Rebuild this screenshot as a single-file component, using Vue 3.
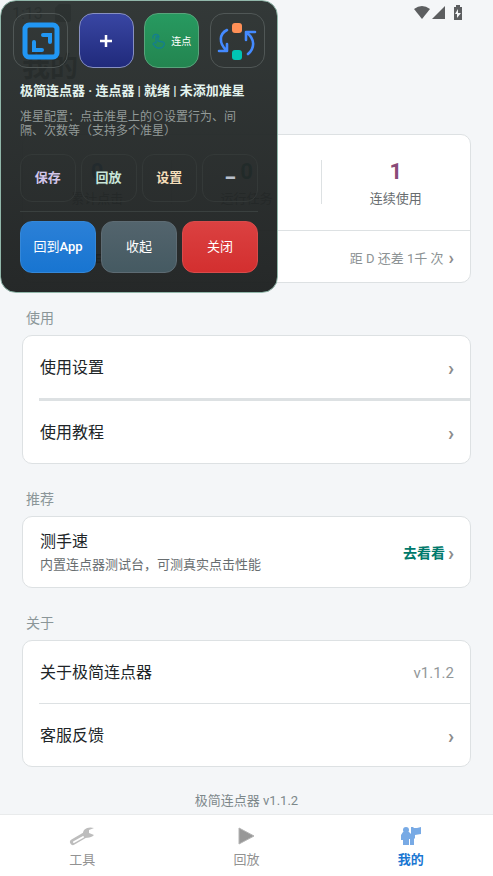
<script setup>
const stats = [
  { value: '0', label: '累计点击', tone: 'blue' },
  { value: '0', label: '运行任务', tone: 'teal' },
  { value: '1', label: '连续使用', tone: 'plum' },
]
const actions = [
  { text: '保存', tone: 'violet' },
  { text: '回放', tone: 'mint' },
  { text: '设置', tone: 'cream' },
  { text: '–', tone: 'mist' },
]
</script>

<template>
  <div class="screen">
    <header class="status">
      <span class="clock">1:13</span>
      <svg class="sim" width="16" height="18" viewBox="0 0 16 18"><path d="M4 0h10a2 2 0 0 1 2 2v14a2 2 0 0 1-2 2H2a2 2 0 0 1-2-2V4z" fill="#555" /></svg>
      <svg class="signals" width="50" height="16" viewBox="0 0 50 16" fill="#5c5e60">
        <path d="M0 4Q8-2 16 4L8 14z" />
        <path d="M31 1v13H18z" />
        <path d="M40 2h2V0h4v2h2v13h-8z" />
        <path d="M44 4l-3 5h2v4l4-5h-3z" fill="#f4f6f8" />
      </svg>
    </header>

    <main class="content">
      <h1>我的</h1>
      <section class="card summary">
        <div class="stats">
          <template v-for="(s, i) in stats" :key="s.label">
            <i v-if="i" class="divider"></i>
            <div class="stat">
              <strong :class="s.tone">{{ s.value }}</strong>
              <span>{{ s.label }}</span>
            </div>
          </template>
        </div>
        <a href="#level" class="level">
          <span class="rank">连点等级 E</span>
          <span>距 D 还差 1千 次</span>
          <b class="chev">›</b>
        </a>
      </section>

      <h2>使用</h2>
      <section class="card">
        <a href="#settings" class="row"><span>使用设置</span><b class="chev">›</b></a>
        <hr class="thick">
        <a href="#guide" class="row"><span>使用教程</span><b class="chev">›</b></a>
      </section>

      <h2>推荐</h2>
      <section class="card">
        <a href="#speed" class="row tall">
          <span class="copy">测手速<small>内置连点器测试台，可测真实点击性能</small></span>
          <span class="go">去看看</span><b class="chev">›</b>
        </a>
      </section>

      <h2>关于</h2>
      <section class="card">
        <a href="#about" class="row"><span>关于极简连点器</span><span class="version">v1.1.2</span></a>
        <hr>
        <a href="#support" class="row"><span>客服反馈</span><b class="chev">›</b></a>
      </section>
      <p class="foot">极简连点器 v1.1.2</p>
    </main>

    <nav class="tabs">
      <a href="#tools">
        <svg width="26" height="20" viewBox="0 0 26 20">
          <path d="M4 16L16 9" stroke="#bdbdbd" stroke-width="6" stroke-linecap="round" />
          <path d="M14 9C13 3 19 0 25 2L20 4V7L25 9C22 12 17 13 14 10z" fill="#bdbdbd" />
          <path d="M5 16L14 11" stroke="#fff" stroke-width="2" stroke-linecap="round" />
        </svg>
        <span>工具</span>
      </a>
      <a href="#replay">
        <svg width="26" height="20" viewBox="0 0 26 20"><path d="M6 2L21 10L6 18z" fill="#989898" stroke="#b4b4b4" /></svg>
        <span>回放</span>
      </a>
      <a href="#me" class="on">
        <svg width="26" height="20" viewBox="0 0 26 20" fill="#78aae5">
          <circle cx="8" cy="4" r="3" />
          <path d="M5 6h6l2 2V1h2l1 1h3l4-1v7l-6 1v3l-1 1v6h-4v-6h-1v6H5v-5H3V9z" />
        </svg>
        <span>我的</span>
      </a>
    </nav>

    <aside class="panel">
      <div class="tools">
        <button class="tool" aria-label="缩放">
          <svg width="38" height="38" viewBox="0 0 38 38" fill="none" stroke="#2196f3" stroke-linecap="round" stroke-linejoin="round">
            <rect x="3" y="3" width="32" height="32" rx="4" stroke-width="5" />
            <path d="M21 13h7v7M12 20v8h8" stroke-width="4" stroke-linejoin="miter" />
          </svg>
        </button>
        <button class="tool indigo" aria-label="添加">
          <svg width="12" height="12" viewBox="0 0 12 12"><path d="M6 0v12M0 6h12" stroke="#fff" stroke-width="2.5" /></svg>
        </button>
        <button class="tool green">
          <svg width="14" height="16" viewBox="0 0 14 16" fill="none" stroke="#157f8d" stroke-width="1.3" stroke-linecap="round" stroke-linejoin="round">
            <path d="M1 5C0 1 6 0 7 4" />
            <path d="M4 10V4q1-1 2 0v4l5 1q2 1 1 3-1 3-4 3H6q-2 0-5-4 1-2 3-1" />
          </svg>
          连点
        </button>
        <button class="tool" aria-label="切换">
          <svg width="40" height="40" viewBox="0 0 40 40" fill="none" stroke="#448aff" stroke-width="2.6" stroke-linecap="round" stroke-linejoin="round">
            <path d="M10 9C2 13 2 22 9 29M2 30h8v-7" />
            <path d="M31 33C38 27 38 18 30 12M29 19v-8h9" />
            <rect x="15" y="2" width="10" height="10" rx="3" fill="#ff9057" stroke="none" />
            <rect x="15" y="29" width="10" height="10" rx="3" fill="#00c4b4" stroke="none" />
          </svg>
        </button>
      </div>
      <strong class="state">极简连点器 · 连点器 | 就绪 | 未添加准星</strong>
      <p class="hint">准星配置：点击准星上的⊙设置行为、间隔、次数等（支持多个准星）</p>
      <div class="actions">
        <button v-for="a in actions" :key="a.text" :class="a.tone">{{ a.text }}</button>
      </div>
      <div class="exits">
        <button class="back">回到<b>App</b></button>
        <button class="fold">收起</button>
        <button class="close">关闭</button>
      </div>
    </aside>
  </div>
</template>

<style>
body { background: #f4f6f8; }
</style>

<style scoped>
* { box-sizing: border-box; }
.screen {
  position: relative;
  min-height: 100vh;
  display: flex;
  flex-direction: column;
  background: #f4f6f8;
  color: #202528;
  font-family: Roboto, "Noto Sans CJK SC", sans-serif;
}
a { color: inherit; text-decoration: none; }
button { font: inherit; padding: 0; cursor: pointer; }
.status { display: flex; align-items: center; gap: 12px; height: 26px; padding: 0 29px 0 12px; }
.clock { font-size: 16px; }
.signals { margin-left: auto; }
.content { flex: 1; padding: 20px 22px 0; }
h1 { margin: 0 0 44px; font-size: 28px; line-height: 44px; }
h2 { margin: 0; padding: 25px 4px 7px; font-size: 14px; line-height: 20px; font-weight: 400; color: #8b9699; }
.card { border: 1px solid #dde1e3; border-radius: 10px; background: #fff; overflow: hidden; }
.stats { display: flex; align-items: flex-start; padding: 25px 0 21px; border-bottom: 1px solid #dde1e3; }
.stat { flex: 1; display: flex; flex-direction: column; align-items: center; gap: 5px; font-size: 13px; line-height: 20px; color: #686d70; }
.divider { width: 1px; height: 44px; background: #dde1e3; }
.stat strong { font-size: 22px; line-height: 24px; }
.stat .blue { color: #1976d2; }
.stat .teal { color: #00796b; }
.stat .plum { color: #8a4b78; }
.level { display: flex; align-items: center; gap: 5px; height: 51px; padding: 2px 16px 0; font-size: 13px; color: #8c9294; }
.rank { margin-right: auto; color: #202528; font-weight: 700; }
.chev { font-size: 20px; line-height: 20px; font-weight: 700; color: #8c8c8c; }
.level .chev { font-size: 18px; }
.row { display: flex; align-items: center; gap: 3px; min-height: 62px; padding: 2px 16px 0 17px; font-size: 16px; line-height: 24px; }
.row > :first-child { margin-right: auto; }
.tall { min-height: 70px; }
.copy { display: flex; flex-direction: column; }
small { font-size: 13px; line-height: 22px; color: #686d70; }
.go { font-size: 14px; font-weight: 700; color: #00796b; }
.version { font-size: 15px; color: #929799; }
hr { height: 1px; margin: 0 0 0 16px; border: 0; background: #dde1e3; }
.thick { height: 3px; }
.foot { margin: 24px 0 0; font-size: 13px; line-height: 20px; text-align: center; color: #7d888b; }
.tabs { display: grid; grid-template-columns: repeat(3, 1fr); height: 62px; border-top: 1px solid #e9ebec; background: #fff; }
.tabs a { display: flex; flex-direction: column; align-items: center; gap: 5px; padding-top: 11px; font-size: 13px; line-height: 18px; color: #929292; }
.tabs .on { color: #1976d2; font-weight: 700; }
.panel {
  position: absolute;
  left: 0;
  top: 0;
  width: 278px;
  padding: 12px 12px 19px;
  border: 1px solid #91b7aa;
  border-radius: 16px;
  background: linear-gradient(rgba(43, 49, 48, .96), rgba(29, 32, 32, .96));
  color: #fff;
}
.tools { display: flex; justify-content: space-between; }
.tool { display: flex; align-items: center; justify-content: center; gap: 5px; width: 55px; height: 55px; border: 1px solid #505756; border-radius: 14px; background: transparent; color: #fff; font-size: 10px; }
.indigo { border-color: #8790c2; background: linear-gradient(#3946a3, #202a7b); }
.green { border-color: #58a47b; background: linear-gradient(#279a60, #238550); }
.state { display: block; margin: 13px 7px 9px; font-size: 13px; line-height: 20px; color: #e3f3ee; white-space: nowrap; }
.hint { margin: 0 7px; width: 228px; font-size: 12px; line-height: 14px; color: #929a98; }
.actions { display: grid; grid-template-columns: repeat(4, 1fr); gap: 5px; margin: 16px 7px 0; padding-bottom: 9px; border-bottom: 1px solid #3a403f; }
.actions button { height: 48px; border: 1px solid #343938; border-radius: 12px; background: transparent; font-size: 13px; line-height: 18px; font-weight: 700; }
.actions .violet { color: #d1c4e9; }
.actions .mint { color: #c8e6d9; }
.actions .cream { color: #f5deba; }
.actions .mist { color: #b8bfcb; font-size: 18px; font-weight: 900; }
.exits { display: grid; grid-template-columns: repeat(3, 1fr); gap: 5px; margin: 9px 7px 0; }
.exits button { height: 52px; border: 1px solid #5d6b73; border-radius: 12px; color: #fff; font-size: 13px; line-height: 18px; }
.exits b { font-weight: 500; }
.exits .back { border-color: #3487d8; background: linear-gradient(#2b80d7, #1875d1); }
.exits .fold { background: linear-gradient(#53646d, #455a62); }
.exits .close { border-color: #d84b4b; background: linear-gradient(#db4141, #d32f2f); }
</style>
